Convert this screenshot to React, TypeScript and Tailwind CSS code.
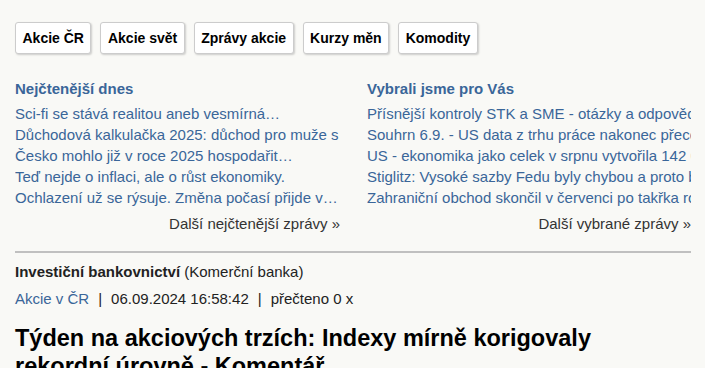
import React from "react";

const buttons = ["Akcie ČR", "Akcie svět", "Zprávy akcie", "Kurzy měn", "Komodity"];

const left = [
  "Sci-fi se stává realitou aneb vesmírná…",
  "Důchodová kalkulačka 2025: důchod pro muže s dětmi",
  "Česko mohlo již v roce 2025 hospodařit…",
  "Teď nejde o inflaci, ale o růst ekonomiky.",
  "Ochlazení už se rýsuje. Změna počasí přijde v…",
];

const right = [
  "Přísnější kontroly STK a SME - otázky a odpovědi",
  "Souhrn 6.9. - US data z trhu práce nakonec přece jen",
  "US - ekonomika jako celek v srpnu vytvořila 142 000 míst",
  "Stiglitz: Vysoké sazby Fedu byly chybou a proto by",
  "Zahraniční obchod skončil v červenci po takřka rok",
];

function Column({ title, items, more, className }: { title: string; items: string[]; more: string; className: string }) {
  return (
    <div className={className}>
      <div className="text-[15px] leading-[21px] font-bold text-[#3a6699]">{title}</div>
      <ul className="mt-[4px]">
        {items.map((t) => (
          <li key={t} className="text-[15px] leading-[21px] text-[#3a6699] whitespace-nowrap overflow-hidden">
            {t}
          </li>
        ))}
      </ul>
      <div className="mt-[5px] text-right text-[15px] leading-[21px] text-[#333]">{more}</div>
    </div>
  );
}

export default function App() {
  return (
    <div
      className="w-[705px] h-[368px] overflow-hidden bg-[#f9f9f6] pl-[15px] pr-[14px] pt-[22px]"
      style={{ fontFamily: '"Liberation Sans", Arial, sans-serif' }}
    >
      <div className="flex gap-[9px]">
        {buttons.map((b) => (
          <div
            key={b}
            className="border border-[#cccccc] rounded-[3px] bg-white px-[6.5px] py-[7px] text-[14px] leading-[16px] font-bold text-black shadow-[1px_1px_2px_rgba(0,0,0,0.18)]"
          >
            {b}
          </div>
        ))}
      </div>

      <div className="mt-[24px] flex">
        <Column className="w-[325px]" title="Nejčtenější dnes" items={left} more="Další nejčtenější zprávy »" />
        <Column className="ml-[27px] w-[324px]" title="Vybrali jsme pro Vás" items={right} more="Další vybrané zprávy »" />
      </div>

      <div className="mt-[17px] h-[2px] bg-[#c0c0c0] w-[676px]" />

      <div className="mt-[8px] text-[15px] leading-[21px] text-[#222]">
        <span className="font-bold">Investiční bankovnictví</span> (Komerční banka)
      </div>
      <div className="mt-[6px] text-[15px] leading-[21px] text-[#222]">
        <span className="text-[#3a6699]">Akcie v ČR</span>
        <span className="mx-[9px]">|</span>
        <span>06.09.2024 16:58:42</span>
        <span className="mx-[9px]">|</span>
        <span>přečteno 0 x</span>
      </div>
      <h1 className="mt-[15px] text-[23.5px] leading-[28px] font-bold text-black w-[676px]">
        Týden na akciových trzích: Indexy mírně korigovaly rekordní úrovně - Komentář
      </h1>
    </div>
  );
}
